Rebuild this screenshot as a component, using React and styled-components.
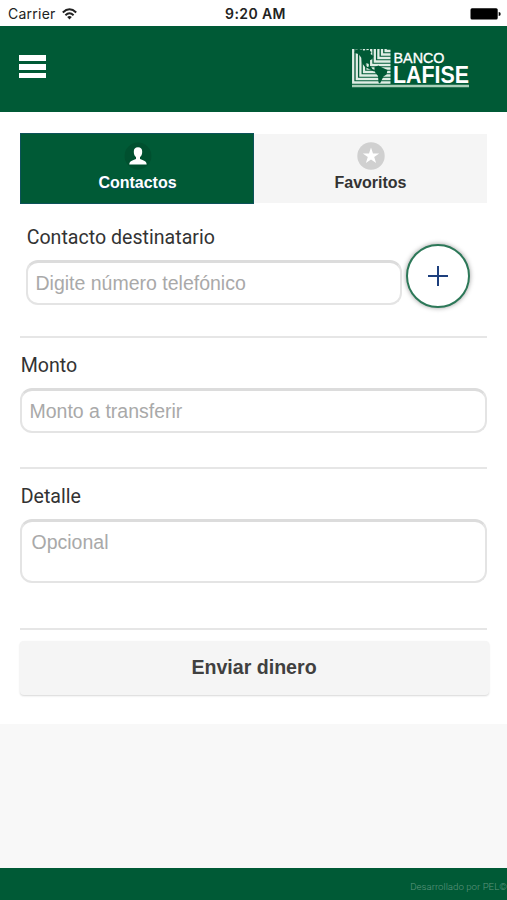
import React, {useState} from "react";
import styled, {createGlobalStyle} from "styled-components";

const GREEN = "#005a36";

const GlobalStyle = createGlobalStyle`
  * {
    box-sizing: border-box;
  }
  body {
    margin: 0;
    background: #f8f8f8;
    font-family: "Liberation Sans", Arial, sans-serif;
  }
`;

const Page = styled.div`
  display: flex;
  flex-direction: column;
  width: 507px;
  height: 900px;
  overflow: hidden;
  background: #f8f8f8;
`;

const StatusBar = styled.div`
  display: grid;
  grid-template-columns: 1fr auto 1fr;
  align-items: center;
  flex: none;
  height: 25.5px;
  padding: 2px 6px 0 8px;
  background: #fff;
  color: #222;
  font: 400 14px "Inter", "Roboto", sans-serif;
`;

const Carrier = styled.div`
  display: flex;
  align-items: center;
  gap: 6px;
  letter-spacing: 0.25px;
`;

const Clock = styled.div`
  padding-left: 2px;
  font-weight: 600;
  letter-spacing: 0.4px;
`;

const Battery = styled.svg`
  justify-self: end;
`;

const Header = styled.header`
  display: flex;
  justify-content: space-between;
  align-items: center;
  flex: none;
  height: 86.5px;
  padding: 0 37px 4px 19px;
  background: ${GREEN};
`;

const MenuButton = styled.button`
  display: flex;
  flex-direction: column;
  gap: 3px;
  padding: 0;
  border: 0;
  background: none;
`;

const MenuLine = styled.span`
  width: 27px;
  height: 5.6px;
  background: #fff;
`;

const LogoSvg = styled.svg`
  margin-top: 5px;
  overflow: visible;
`;

const Card = styled.main`
  flex: none;
  height: 612px;
  padding: 21px 20px 0;
  background: #fff;
`;

const Tabs = styled.div`
  display: grid;
  grid-template-columns: 234px 233px;
  align-items: center;
  height: 71px;
`;

const Tab = styled.button`
  display: flex;
  flex-direction: column;
  align-items: center;
  height: ${({$active}) => ($active ? "71px" : "69px")};
  padding: 8px 0 0 ${({$active}) => ($active ? "1px" : "0")};
  border: ${({$active}) => ($active ? "1px solid #0c5259" : "0")};
  background: ${({$active}) => ($active ? GREEN : "#f5f5f5")};
  color: ${({$active}) => ($active ? "#fff" : "#333")};
  text-shadow: ${({$active}) => ($active ? "0 1px 0 #0b4a6b" : "none")};
  font: 700 16px/18px "Liberation Sans", Arial, sans-serif;
`;

const TabIcon = styled.svg`
  flex: none;
  margin-bottom: 4px;
`;

const Section = styled.section`
  height: ${({$height}) => $height}px;
  padding: ${({$inset}) => ($inset ? "22px 17px 0 6px" : "16px 0 0")};
  border-bottom: 2px solid #e6e6e6;
`;

const Label = styled.label`
  display: block;
  height: 24px;
  padding-left: 0.7px;
  color: #333;
  font: 400 19.6px/24px "Roboto", sans-serif;
`;

const ContactRow = styled.div`
  display: flex;
  align-items: flex-start;
  gap: 4px;
`;

const Input = styled.input`
  display: block;
  flex: 1;
  width: 100%;
  height: 45px;
  margin: 10px 0 0;
  padding: 1px 7.5px 0;
  border: 2px solid #e4e4e4;
  border-top: 3px solid #dcdcdc;
  border-radius: 12px;
  outline: 0;
  background: #fff;
  color: #333;
  font: 400 19.5px "Liberation Sans", Arial, sans-serif;
  &::placeholder {
    color: #a9a9a9;
    opacity: 1;
  }
`;

const TextArea = styled(Input).attrs({as: "textarea"})`
  height: 64px;
  padding: 9px 9.5px 0;
  resize: none;
`;

const AddButton = styled.button`
  display: flex;
  justify-content: center;
  align-items: center;
  width: 64px;
  height: 64px;
  margin-top: -6.5px;
  padding: 0;
  border: 2px solid #2c7858;
  border-radius: 50%;
  background: #fff;
  box-shadow: 0 0 5px rgba(0, 0, 0, 0.4);
`;

const SendButton = styled.button`
  display: block;
  width: 469px;
  height: 54px;
  margin: 11px 0 0;
  padding: 0 1px 1px 0;
  border: 0;
  border-radius: 4px;
  background: #f5f5f5;
  box-shadow: 0 1px 2px rgba(0, 0, 0, 0.16);
  color: #404040;
  font: 700 19.6px "Liberation Sans", Arial, sans-serif;
`;

const Footer = styled.footer`
  display: flex;
  justify-content: flex-end;
  align-items: center;
  height: 32px;
  margin-top: auto;
  padding-top: 4px;
  background: ${GREEN};
  color: #5f957d;
  white-space: nowrap;
  font: 300 9.7px "Roboto", sans-serif;
`;

// nested L shaped lines behind the map
const mapLines = [0, 1, 2, 3, 4, 5, 6, 7, 8, 9];

const Logo = () => (
    <LogoSvg width="118" height="42" viewBox="0 0 118 42">
        <g stroke="#e0eee5" strokeWidth="2.3" fill="none">
            {mapLines.map((n) => (
                <path key={n} d={`M${1.2 + n * 3.6} 1V${34.5 - n * 3.5}H38.5`}/>
            ))}
        </g>
        <path
            d="M3.5 1.5l4-.5 4 1.5 5-.5 3 2-1 2 3 2-1 3-3 1.5-.5 3.5-3-1-1 2 2.5 2 3-1 2 3 2.5 1.5-1 1-4-2-5-2.5-3-4-.5-5-3-4-4-1z"
            fill={GREEN}
        />
        <path d="M22.5 19l4-1.5 3.5 2 5.5 2.5-1 4.5-3 2-2 4-1.5 3-1.5-1-.5-6.500-3.500-4.500z" fill={GREEN}/>
        <path d="M0 38H117" stroke="#a9cfb9" strokeWidth="2.6"/>
        <g fill="#fff" fontFamily="Liberation Sans, Arial, sans-serif">
            <text x="41.5" y="15" fontSize="14" stroke="#fff" strokeWidth=".35" textLength="51" lengthAdjust="spacingAndGlyphs">BANCO</text>
            <text x="41" y="35" fontSize="23.5" fontWeight="700" textLength="76" lengthAdjust="spacingAndGlyphs">LAFISE</text>
        </g>
    </LogoSvg>
);

const ContactIcon = () => (
    <TabIcon width="28" height="28" viewBox="0 0 28 28">
        <circle cx="14" cy="14" r="13.4" fill="#00502f"/>
        <path
            d="M14 5.3c-2.8 0-4.3 1.8-4.2 4.4 0 2.4.8 4.2 2.2 5.4v1.8c-3.5 1.4-6.5 1.8-6.7 5.6h17.4c-.2-3.8-3.2-4.2-6.7-5.6v-1.8c1.4-1.2 2.2-3 2.2-5.4.1-2.6-1.4-4.4-4.2-4.4z"
            fill="#fff"
        />
    </TabIcon>
);

const StarIcon = () => (
    <TabIcon width="28" height="28" viewBox="0 0 28 28">
        <circle cx="14" cy="14" r="13.7" fill="#d0d0d0"/>
        <path d="M14 5.6l2 5.9h6.2l-5 3.6 1.9 5.9-5.1-3.6L8.9 21l1.9-5.9-5-3.6H12z" fill="#fff"/>
    </TabIcon>
);

const App = () => {
    const [tab, setTab] = useState("contactos");

    return (
        <Page>
            <GlobalStyle/>
            <StatusBar>
                <Carrier>
                    Carrier
                    <svg width="15" height="12" viewBox="0 0 15 12">
                        <g fill="none" stroke="#222" strokeWidth="2">
                            <path d="M.8 4.4Q7.5-1.8 14.2 4.4"/>
                            <path d="M3.4 7.2Q7.5 3.4 11.6 7.2"/>
                        </g>
                        <path d="M5.2 9Q7.5 7 9.8 9L7.5 11.5z" fill="#222"/>
                    </svg>
                </Carrier>
                <Clock>9:20 AM</Clock>
                <Battery width="31" height="12" viewBox="0 0 31 12">
                    <rect x=".5" y=".3" width="27.2" height="11.2" rx="1.5"/>
                    <path d="M28.7 4q2 .2 2 2t-2 2z"/>
                </Battery>
            </StatusBar>
            <Header>
                <MenuButton aria-label="Menu">
                    <MenuLine/>
                    <MenuLine/>
                    <MenuLine/>
                </MenuButton>
                <Logo/>
            </Header>
            <Card>
                <Tabs>
                    <Tab $active={tab === "contactos"} onClick={() => setTab("contactos")}>
                        <ContactIcon/>
                        Contactos
                    </Tab>
                    <Tab $active={tab === "favoritos"} onClick={() => setTab("favoritos")}>
                        <StarIcon/>
                        Favoritos
                    </Tab>
                </Tabs>
                <Section $height={134} $inset>
                    <Label htmlFor="contacto">Contacto destinatario</Label>
                    <ContactRow>
                        <Input id="contacto" placeholder="Digite número telefónico"/>
                        <AddButton aria-label="Agregar">
                            <svg width="20" height="20" viewBox="0 0 20 20">
                                <path d="M10 0v20M0 10h20" stroke="#1d3f7d" strokeWidth="2"/>
                            </svg>
                        </AddButton>
                    </ContactRow>
                </Section>
                <Section $height={131}>
                    <Label htmlFor="monto">Monto</Label>
                    <Input id="monto" placeholder="Monto a transferir"/>
                </Section>
                <Section $height={161}>
                    <Label htmlFor="detalle">Detalle</Label>
                    <TextArea id="detalle" placeholder="Opcional"/>
                </Section>
                <SendButton>Enviar dinero</SendButton>
            </Card>
            <Footer>Desarrollado por PEL©</Footer>
        </Page>
    );
};

export default App;
